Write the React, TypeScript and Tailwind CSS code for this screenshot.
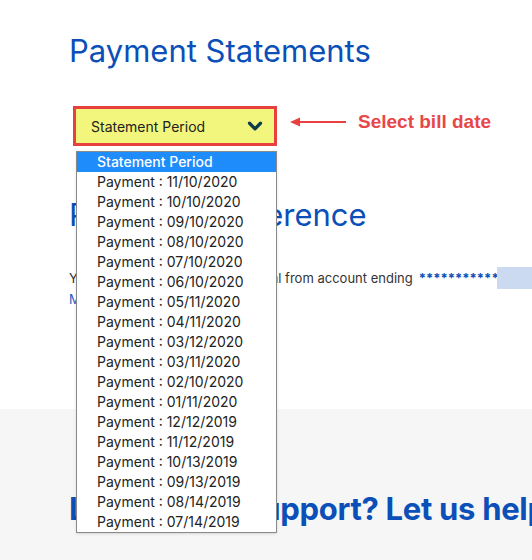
import { ChevronDown } from 'lucide-react';

const periods = [
    '11/10/2020',
    '10/10/2020',
    '09/10/2020',
    '08/10/2020',
    '07/10/2020',
    '06/10/2020',
    '05/11/2020',
    '04/11/2020',
    '03/12/2020',
    '03/11/2020',
    '02/10/2020',
    '01/11/2020',
    '12/12/2019',
    '11/12/2019',
    '10/13/2019',
    '09/13/2019',
    '08/14/2019',
    '07/14/2019',
];

export default function App() {
    return (
        <div className="relative w-[532px] h-[560px] overflow-hidden bg-white font-['Inter',sans-serif] text-[#222]">
            {/* Statements */}
            <section className="h-[409px] px-[69px] pt-[33px]">
                <h1 className="text-[31px] leading-[36px] text-[#0b4fb8] whitespace-nowrap">Payment Statements</h1>

                <div className="mt-[37px] ml-[4px] flex items-center">
                    <div className="shrink-0 w-[204px] h-[40px] border-[3px] border-[#e8403f] bg-[#f2f67c] flex items-center justify-between pl-[15px] pr-[8px]">
                        <span className="text-[14px] text-[#222]">Statement Period</span>
                        <ChevronDown className="w-[22px] h-[22px] text-[#0d3c4c]" strokeWidth={3.5} />
                    </div>
                    <div className="shrink-0 flex items-center mb-[8px]">
                        <svg width="56" height="12" viewBox="0 0 56 12" className="shrink-0 ml-[13px]">
                            <line x1="4" y1="6" x2="56" y2="6" stroke="#e8403f" strokeWidth="2" />
                            <path d="M0 6 L10 1.5 L10 10.5 Z" fill="#e8403f" />
                        </svg>
                        <span className="shrink-0 ml-[12px] font-['Liberation_Sans',sans-serif] font-bold text-[19px] text-[#e8474a] whitespace-nowrap">
                            Select bill date
                        </span>
                    </div>
                </div>

                <h2 className="mt-[51px] text-[31px] leading-[36px] text-[#0b4fb8] whitespace-nowrap">Payment Preference</h2>

                <div className="mt-[34px] text-[13px] leading-[21px] whitespace-nowrap">
                    <p className="flex items-center text-[#333]">
                        You are set up for auto-withdrawal from account ending
                        <span className="ml-[6px] font-bold text-[#0b4fb8]">***********</span>
                        <span className="shrink-0 ml-[-2px] inline-block w-[45px] h-[22px] bg-[#cbd9f1]" />
                    </p>
                    <p>
                        <a className="text-[#1a5fc8]">Manage payment settings</a>
                    </p>
                </div>
            </section>

            {/* Support */}
            <section className="h-[151px] bg-[#f6f6f6] px-[69px] pt-[80px]">
                <h2 className="text-[31px] leading-[40px] font-bold text-[#0b4fb8] whitespace-nowrap tracking-[-0.3px]">
                    Looking for support? Let us help
                </h2>
            </section>

            {/* Open select menu */}
            <ul className="absolute left-[76px] top-[151px] w-[201px] border border-[#8a8a8a] bg-white text-[14px] leading-[20px] shadow-sm">
                <li className="h-[20px] pl-[20px] bg-[#1e8cfb] text-white font-medium">Statement Period</li>
                {periods.map((d) => (
                    <li key={d} className="h-[20px] pl-[20px] text-[#222]">
                        Payment : {d}
                    </li>
                ))}
            </ul>
        </div>
    );
}
